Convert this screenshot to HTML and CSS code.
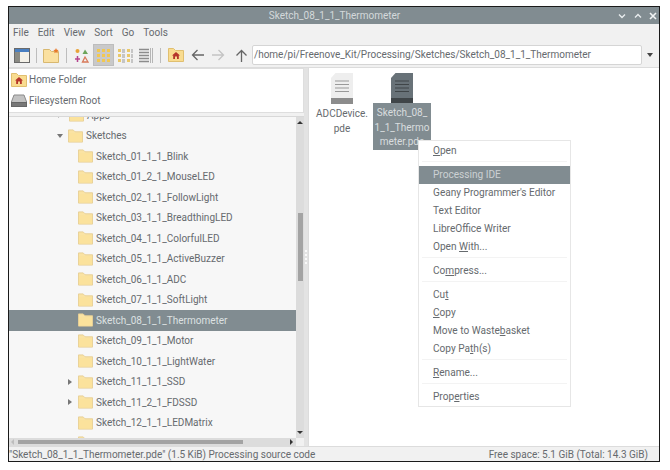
FILE: index.html
```html
<!DOCTYPE html>
<html lang="en">
<head>
<meta charset="utf-8">
<title>Sketch_08_1_1_Thermometer</title>
<link rel="stylesheet" href="styles.css">
</head>
<body>
<svg class="defs" width="0" height="0" aria-hidden="true">
  <symbol id="folder" viewBox="0 0 16 14">
    <path d="M.5 13.5V.5h5l2 2h8v11z" fill="#fae3a3" stroke="#e6cf95"/>
    <path d="M1 4h14v9H1z" fill="#fbe29c"/>
  </symbol>
  <symbol id="homefolder" viewBox="0 0 16 14">
    <path d="M.5 13.5V.5h5l2 2h8v11z" fill="#f9dc90" stroke="#e0bf70"/>
    <path d="M8 4l4 3.6h-1.2V11H9V8.6H7V11H5.200V7.600H4z" fill="#b5352a"/>
  </symbol>
  <symbol id="doc" viewBox="0 0 22 31">
    <path d="M4.500 0H22v31H0V5z" fill="#eeeeee"/>
    <path d="M0 25h22v6H0z" fill="#8c8c8c"/>
    <path d="M4 8h14M4 11.500h14M4 15h14M4 18.500h14" stroke="#999" fill="none"/>
  </symbol>
  <symbol id="docsel" viewBox="0 0 22 31">
    <path d="M4.500 0H22v31H0V5z" fill="#687278"/>
    <path d="M0 25h22v6H0z" fill="#3f4548"/>
    <path d="M4 8h14M4 11.500h14M4 15h14M4 18.500h14" stroke="#3f4548" fill="none"/>
  </symbol>
</svg>

<div class="window">
  <header class="titlebar">
    <span class="title">Sketch_08_1_1_Thermometer</span>
    <div class="winbtns">
      <svg width="8" height="6" viewBox="0 0 8 6"><path d="M1 1.500l3 3 3-3" fill="none" stroke="#e8ecee" stroke-width="1.400"/></svg>
      <svg width="8" height="6" viewBox="0 0 8 6"><path d="M1 4.500l3-3 3 3" fill="none" stroke="#e8ecee" stroke-width="1.400"/></svg>
      <svg width="8" height="8" viewBox="0 0 8 8"><path d="M1 1l6 6M7 1L1 7" fill="none" stroke="#f2f4f5" stroke-width="1.600"/></svg>
    </div>
  </header>

  <nav class="menubar">
    <span>File</span><span>Edit</span><span>View</span><span>Sort</span><span>Go</span><span>Tools</span>
  </nav>

  <div class="toolbar">
    <svg class="tool t-panel" width="16" height="15" viewBox="0 0 16 15">
      <rect x=".5" y=".5" width="15" height="14" fill="#f4f1e8" stroke="#6a6a6a"/>
      <rect x="1" y="1" width="14" height="3" fill="#4a7fc0"/>
      <rect x="1" y="4" width="5" height="10" fill="#8b8b84"/>
    </svg>
    <i class="sep s1"></i>
    <svg class="tool t-new" width="17" height="15" viewBox="0 0 17 15">
      <path d="M.5 14.500V1.500h6l2 2h7v11z" fill="#fae0a0" stroke="#d8b870"/>
      <path d="M13 0l.8 1.800 1.900.2-1.400 1.300.4 1.900-1.700-1-1.700 1 .4-1.900L10.300 2l1.900-.2z" fill="#e8792a"/>
    </svg>
    <i class="sep s2"></i>
    <svg class="tool t-filter" width="15" height="15" viewBox="0 0 15 15">
      <circle cx="3.500" cy="3" r="2" fill="#e8a33a"/>
      <path d="M8.500 6L11 1.500 14 6z" fill="#6da55a"/>
      <path d="M3.500 8v6M1 11h5" stroke="#b6458f" stroke-width="1.500"/>
      <path d="M8.500 14l2.500-5 3 5z" fill="none" stroke="#d87a5a" stroke-width="1.300"/>
    </svg>
    <div class="tool-active">
      <svg width="15" height="15" viewBox="0 0 15 15" fill="#f2c850">
        <path d="M1 1h3v3H1zM6 1h3v3H6zM11 1h3v3h-3zM1 6h3v3H1zM6 6h3v3H6zM11 6h3v3h-3zM1 11h3v3H1zM6 11h3v3H6zM11 11h3v3h-3z"/>
      </svg>
    </div>
    <svg class="tool t-compact" width="16" height="15" viewBox="0 0 16 15">
      <path d="M1 1h3v3H1zM1 6h3v3H1zM1 11h3v3H1zM10 1h3v3h-3zM10 6h3v3h-3zM10 11h3v3h-3z" fill="#e9c869"/>
      <path d="M5 2h3M5 4h3M5 7h3M5 9h3M5 12h3M5 14h3M14 2h2M14 4h2M14 7h2M14 9h2M14 12h2M14 14h2" stroke="#999"/>
    </svg>
    <svg class="tool t-detail" width="15" height="15" viewBox="0 0 15 15">
      <path d="M0 1.500h10M0 4.500h10M0 7.500h10M0 10.500h10M0 13.500h10" stroke="#8c8c8c" stroke-width="1.400"/>
      <path d="M11.500 0v15M13.500 0v15" stroke="#b5b5b5"/>
    </svg>
    <i class="sep s3"></i>
    <svg class="tool t-home" width="16" height="14"><use href="#homefolder"/></svg>
    <svg class="tool t-back" width="13" height="12" viewBox="0 0 13 12"><path d="M13 6H1.500M6.500 1l-5 5 5 5" fill="none" stroke="#666" stroke-width="1.300"/></svg>
    <svg class="tool t-fwd" width="13" height="12" viewBox="0 0 13 12"><path d="M0 6h11.500M6.500 1l5 5-5 5" fill="none" stroke="#c4c4c4" stroke-width="1.300"/></svg>
    <svg class="tool t-up" width="13" height="13" viewBox="0 0 13 13"><path d="M6.500 13V1.500M1.500 6.500l5-5 5 5" fill="none" stroke="#666" stroke-width="1.300"/></svg>
    <div class="address">/home/pi/Freenove_Kit/Processing/Sketches/Sketch_08_1_1_Thermometer</div>
    <i class="caret"></i>
  </div>

  <div class="panes">
    <aside class="side">
      <div class="places">
        <div class="place"><svg width="16" height="14"><use href="#homefolder"/></svg>Home Folder</div>
        <div class="place">
          <svg width="16" height="13" viewBox="0 0 16 13">
            <path d="M3 1h10l3 8H0z" fill="#c2c2c2" stroke="#8a8a8a"/>
            <rect x=".5" y="8.500" width="15" height="4" fill="#777" stroke="#666"/>
          </svg>Filesystem Root
        </div>
      </div>
      <div class="treewrap">
        <div class="treecol">
          <div class="tree">
            <div class="row lvl1"><i class="exp-right ghost"></i><svg width="15" height="14"><use href="#folder"/></svg>Apps</div>
            <div class="row lvl1"><i class="exp-down"></i><svg width="15" height="14"><use href="#folder"/></svg>Sketches</div>
            <div class="row lvl2"><svg width="15" height="14"><use href="#folder"/></svg>Sketch_01_1_1_Blink</div>
            <div class="row lvl2"><svg width="15" height="14"><use href="#folder"/></svg>Sketch_01_2_1_MouseLED</div>
            <div class="row lvl2"><svg width="15" height="14"><use href="#folder"/></svg>Sketch_02_1_1_FollowLight</div>
            <div class="row lvl2"><svg width="15" height="14"><use href="#folder"/></svg>Sketch_03_1_1_BreadthingLED</div>
            <div class="row lvl2"><svg width="15" height="14"><use href="#folder"/></svg>Sketch_04_1_1_ColorfulLED</div>
            <div class="row lvl2"><svg width="15" height="14"><use href="#folder"/></svg>Sketch_05_1_1_ActiveBuzzer</div>
            <div class="row lvl2"><svg width="15" height="14"><use href="#folder"/></svg>Sketch_06_1_1_ADC</div>
            <div class="row lvl2"><svg width="15" height="14"><use href="#folder"/></svg>Sketch_07_1_1_SoftLight</div>
            <div class="row lvl2 selected"><svg width="15" height="14"><use href="#folder"/></svg>Sketch_08_1_1_Thermometer</div>
            <div class="row lvl2"><svg width="15" height="14"><use href="#folder"/></svg>Sketch_09_1_1_Motor</div>
            <div class="row lvl2"><svg width="15" height="14"><use href="#folder"/></svg>Sketch_10_1_1_LightWater</div>
            <div class="row lvl2 has"><i class="exp-right"></i><svg width="15" height="14"><use href="#folder"/></svg>Sketch_11_1_1_SSD</div>
            <div class="row lvl2 has"><i class="exp-right"></i><svg width="15" height="14"><use href="#folder"/></svg>Sketch_11_2_1_FDSSD</div>
            <div class="row lvl2"><svg width="15" height="14"><use href="#folder"/></svg>Sketch_12_1_1_LEDMatrix</div>
            <div class="row lvl2"><svg width="15" height="14"><use href="#folder"/></svg></div>
          </div>
          <div class="vscroll">
            <i class="arrow-up"></i>
            <i class="vthumb"></i>
            <i class="arrow-down"></i>
          </div>
        </div>
        <div class="hscroll">
          <i class="arrow-left"></i>
          <i class="hthumb"></i>
          <i class="arrow-right"></i>
        </div>
      </div>
    </aside>
    <div class="grip"><i></i><i></i><i></i><i></i></div>
    <main class="files">
      <div class="file">
        <svg width="22" height="31"><use href="#doc"/></svg>
        <div class="label">ADCDevice.<br>pde</div>
      </div>
      <div class="file selfile">
        <svg width="22" height="31"><use href="#docsel"/></svg>
        <div class="label">Sketch_08_<br>1_1_Thermo<br>meter.pde</div>
      </div>
    </main>
  </div>

  <footer class="status">
    <span>"Sketch_08_1_1_Thermometer.pde" (1.5 KiB) Processing source code</span>
    <span>Free space: 5.1 GiB (Total: 14.3 GiB)</span>
  </footer>
</div>

<div class="menu">
  <div class="item"><u>O</u>pen</div>
  <hr>
  <div class="item hot">Processing IDE</div>
  <div class="item">Geany Programmer's Editor</div>
  <div class="item">Text Editor</div>
  <div class="item">LibreOffice Writer</div>
  <div class="item">Open <u>W</u>ith...</div>
  <hr>
  <div class="item">Co<u>m</u>press...</div>
  <hr>
  <div class="item">Cu<u>t</u></div>
  <div class="item"><u>C</u>opy</div>
  <div class="item">Move to Waste<u>b</u>asket</div>
  <div class="item">Copy Pa<u>t</u>h(s)</div>
  <hr>
  <div class="item"><u>R</u>ename...</div>
  <hr>
  <div class="item">Prop<u>e</u>rties</div>
</div>
</body>
</html>
```

FILE: styles.css
```css
* { box-sizing: border-box; }
html, body { margin: 0; padding: 0; background: #fff; overflow: hidden; }
body {
  width: 670px;
  height: 470px;
  padding: 6px 0 0 8px;
  font-family: Roboto, "Liberation Sans", sans-serif;
  font-size: 10px;
  color: #666a6e;
}
.defs { position: absolute; }

.window {
  width: 652px;
  height: 456px;
  border: 1px solid #1a1a1a;
  background: #f1f1f1;
  display: flex;
  flex-direction: column;
}

.titlebar {
  height: 17px;
  flex: none;
  background: #818c91;
  color: #d4d9db;
  display: flex;
  align-items: center;
  justify-content: center;
  position: relative;
  padding-left: 1px;
}
.winbtns {
  position: absolute;
  right: 2px;
  top: 0;
  height: 100%;
  display: flex;
  align-items: center;
  gap: 7.500px;
}

.menubar {
  height: 17px;
  flex: none;
  display: flex;
  gap: 9px;
  padding: 0 0 0 4px;
  align-items: center;
}

.toolbar {
  height: 26px;
  flex: none;
  display: flex;
  align-items: center;
  padding: 2px 0 0 5px;
}
.tool { flex: none; }
.sep { flex: none; width: 1px; height: 15px; background: #bdbdbd; }
.s1 { margin-left: 6px; }
.t-new { margin-left: 6px; }
.s2 { margin-left: 6px; }
.t-filter { margin-left: 7px; }
.tool-active {
  flex: none;
  width: 21px;
  height: 22px;
  margin-left: 4px;
  background: #c9c9c9;
  border: 1px solid #bdbdbd;
  display: flex;
  align-items: center;
  justify-content: center;
}
.t-compact { margin-left: 3px; }
.t-detail { margin-left: 6px; }
.s3 { margin-left: 6px; }
.t-home { margin-left: 7px; }
.t-back { margin-left: 7px; }
.t-fwd { margin-left: 8px; }
.t-up { margin-left: 10px; }
.address {
  width: 390px;
  height: 20px;
  margin-left: 4px;
  flex: none;
  background: #fff;
  border: 1px solid #d5d5d5;
  border-radius: 2px;
  padding-left: 1px;
  line-height: 18px;
  white-space: nowrap;
}
.caret {
  flex: none;
  margin-left: 5px;
  border-left: 3.500px solid transparent;
  border-right: 3.500px solid transparent;
  border-top: 4px solid #444;
}

.panes {
  flex: 1;
  min-height: 0;
  display: flex;
  border-top: 1px solid #dcdcdc;
}
.side {
  width: 295px;
  flex: none;
  display: flex;
  flex-direction: column;
}
.places {
  height: 45px;
  flex: none;
  background: #fff;
  border: 1px solid #dedede;
  border-left: 0;
}
.place {
  height: 21px;
  display: flex;
  align-items: center;
  gap: 2px;
  padding-left: 2px;
}
.treewrap {
  flex: 1;
  min-height: 0;
  margin-top: 3px;
  display: flex;
  flex-direction: column;
  border-top: 1px solid #d8d8d8;
}
.treecol { flex: 1; min-height: 0; display: flex; }
.tree {
  flex: 1;
  min-width: 0;
  background: #f7f7f7;
  overflow: hidden;
}
.row {
  height: 20.500px;
  display: flex;
  align-items: center;
  gap: 3px;
  white-space: nowrap;
}
.row:first-child { margin-top: -12px; }
.lvl1 { padding-left: 48px; }
.lvl2 { padding-left: 69px; }
.lvl2.has { padding-left: 59px; }
.lvl2.has svg { margin-left: 3px; }
.selected { background: #818c91; color: #dde1e2; }
.exp-down, .exp-right { flex: none; width: 0; height: 0; }
.lvl1 i { margin-right: 2px; }
.lvl1 .exp-right { margin-left: 1px; margin-right: 4px; }
.exp-down {
  border-left: 3.500px solid transparent;
  border-right: 3.500px solid transparent;
  border-top: 4px solid #777;
}
.exp-right {
  border-top: 3.500px solid transparent;
  border-bottom: 3.500px solid transparent;
  border-left: 4px solid #777;
}
.ghost { opacity: .6; }

.vscroll {
  width: 8px;
  flex: none;
  background: #dcdcdc;
  display: flex;
  flex-direction: column;
  align-items: center;
  position: relative;
}
.vthumb {
  position: absolute;
  top: 96px;
  left: 1.500px;
  width: 5px;
  height: 68px;
  background: #a3a3a3;
}
.arrow-up, .arrow-down { flex: none; width: 0; height: 0; border-left: 3px solid transparent; border-right: 3px solid transparent; }
.arrow-up { border-bottom: 3px solid #333; margin-top: 4px; }
.arrow-down { border-top: 3px solid #333; margin-top: auto; margin-bottom: 4px; }

.hscroll {
  height: 8px;
  flex: none;
  background: #dcdcdc;
  display: flex;
  align-items: center;
  padding-left: 2px;
  margin-right: 8px;
}
.arrow-left, .arrow-right { flex: none; width: 0; height: 0; border-top: 3px solid transparent; border-bottom: 3px solid transparent; }
.arrow-left { border-right: 3px solid #bdbdbd; }
.hthumb { flex: none; width: 225px; height: 4px; margin-left: 4px; background: #a3a3a3; }
.arrow-right { border-left: 3px solid #333; margin-left: 47px; }

.grip {
  width: 4px;
  flex: none;
  background: #e3e3e3;
  display: flex;
  flex-direction: column;
  justify-content: center;
  align-items: center;
  gap: 2px;
}
.grip i { width: 2px; height: 2px; background: #fafafa; }

.files {
  flex: 1;
  min-width: 0;
  background: #fff;
  border-left: 1px solid #dcdcdc;
  display: flex;
  align-items: flex-start;
  padding: 5px 0 0 4px;
  gap: 2px;
}
.file {
  width: 58px;
  display: flex;
  flex-direction: column;
  align-items: center;
  text-align: center;
}
.label {
  width: 58px;
  line-height: 14.500px;
  padding-top: 3px;
  height: 47px;
}
.selfile .label { background: #818c91; color: #d9dddf; margin-top: -1px; }

.status {
  height: 15px;
  flex: none;
  border-top: 1px solid #dcdcdc;
  display: flex;
  justify-content: space-between;
  align-items: center;
  padding: 0 11px 0 0;
  white-space: nowrap;
}

.menu {
  position: absolute;
  left: 418px;
  top: 140px;
  width: 153px;
  background: #fff;
  border: 1px solid #e6e6e6;
  padding: 1px 0 0;
  font-size: 10.100px;
}
.item {
  height: 18px;
  line-height: 18px;
  padding-left: 14px;
  white-space: nowrap;
}
.item.hot { background: #818c91; color: #ccd1d3; }
.menu hr {
  border: 0;
  height: 1px;
  background: #f3f3f3;
  margin: 1px 3px 4px;
}
```
